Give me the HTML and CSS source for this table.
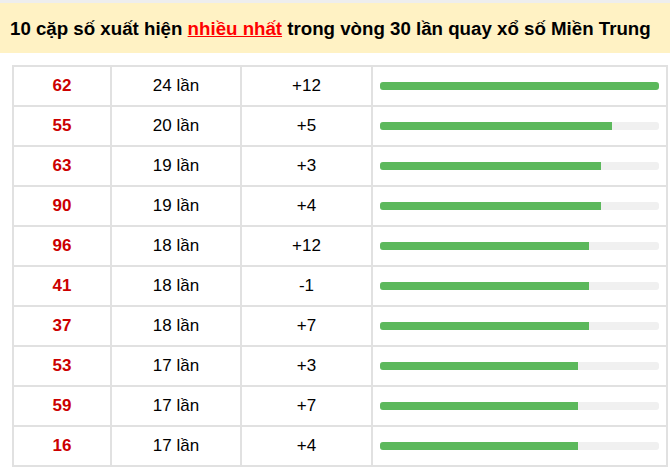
FILE: index.html
```html
<!DOCTYPE html>
<html lang="vi">
<head>
<meta charset="utf-8">
<link rel="stylesheet" href="styles.css">
</head>
<body>
<div class="topline"></div>
<h2 class="title">10 cặp số xuất hiện <span class="hl">nhiều nhất</span> trong vòng 30 lần quay xổ số Miền Trung</h2>
<table class="stats">
<tr><td class="num">62</td><td>24 lần</td><td>+12</td><td class="barcell"><div class="track"><div class="fill" style="width:100%"></div></div></td></tr>
<tr><td class="num">55</td><td>20 lần</td><td>+5</td><td class="barcell"><div class="track"><div class="fill" style="width:83.33%"></div></div></td></tr>
<tr><td class="num">63</td><td>19 lần</td><td>+3</td><td class="barcell"><div class="track"><div class="fill" style="width:79.17%"></div></div></td></tr>
<tr><td class="num">90</td><td>19 lần</td><td>+4</td><td class="barcell"><div class="track"><div class="fill" style="width:79.17%"></div></div></td></tr>
<tr><td class="num">96</td><td>18 lần</td><td>+12</td><td class="barcell"><div class="track"><div class="fill" style="width:75%"></div></div></td></tr>
<tr><td class="num">41</td><td>18 lần</td><td>-1</td><td class="barcell"><div class="track"><div class="fill" style="width:75%"></div></div></td></tr>
<tr><td class="num">37</td><td>18 lần</td><td>+7</td><td class="barcell"><div class="track"><div class="fill" style="width:75%"></div></div></td></tr>
<tr><td class="num">53</td><td>17 lần</td><td>+3</td><td class="barcell"><div class="track"><div class="fill" style="width:70.83%"></div></div></td></tr>
<tr><td class="num">59</td><td>17 lần</td><td>+7</td><td class="barcell"><div class="track"><div class="fill" style="width:70.83%"></div></div></td></tr>
<tr><td class="num">16</td><td>17 lần</td><td>+4</td><td class="barcell"><div class="track"><div class="fill" style="width:70.83%"></div></div></td></tr>
</table>
</body>
</html>
```
FILE: styles.css
```css
html, body {
  margin: 0;
  padding: 0;
  background: #fff;
  font-family: "Liberation Sans", Arial, sans-serif;
  color: #000;
}
.topline {
  height: 3px;
  background: #eeeeee;
}
.title {
  margin: 0;
  height: 50px;
  box-sizing: border-box;
  padding: 1px 0 0 10px;
  line-height: 50px;
  background: #fff2c4;
  font-size: 18.7px;
  font-weight: bold;
  white-space: nowrap;
}
.hl {
  color: #f00;
  text-decoration: underline;
}
.stats {
  margin: 12px 0 0 12px;
  width: 656px;
  border-collapse: collapse;
  border: 2px solid #e1e1e1;
  table-layout: fixed;
}
.stats td {
  border: 2px solid #e1e1e1;
  height: 40px;
  padding: 0;
  text-align: center;
  vertical-align: middle;
  font-size: 17px;
  box-sizing: border-box;
}
.stats td:nth-child(1) { width: 98px; }
.stats td:nth-child(2) { width: 130px; }
.stats td:nth-child(3) { width: 131px; }
.num {
  color: #cc0000;
  font-weight: bold;
}
.barcell {
  padding: 0 7px !important;
}
.track {
  height: 8px;
  background: #f0f0f0;
  border-radius: 3px;
  overflow: hidden;
}
.fill {
  height: 100%;
  background: #5cb85c;
}
```
